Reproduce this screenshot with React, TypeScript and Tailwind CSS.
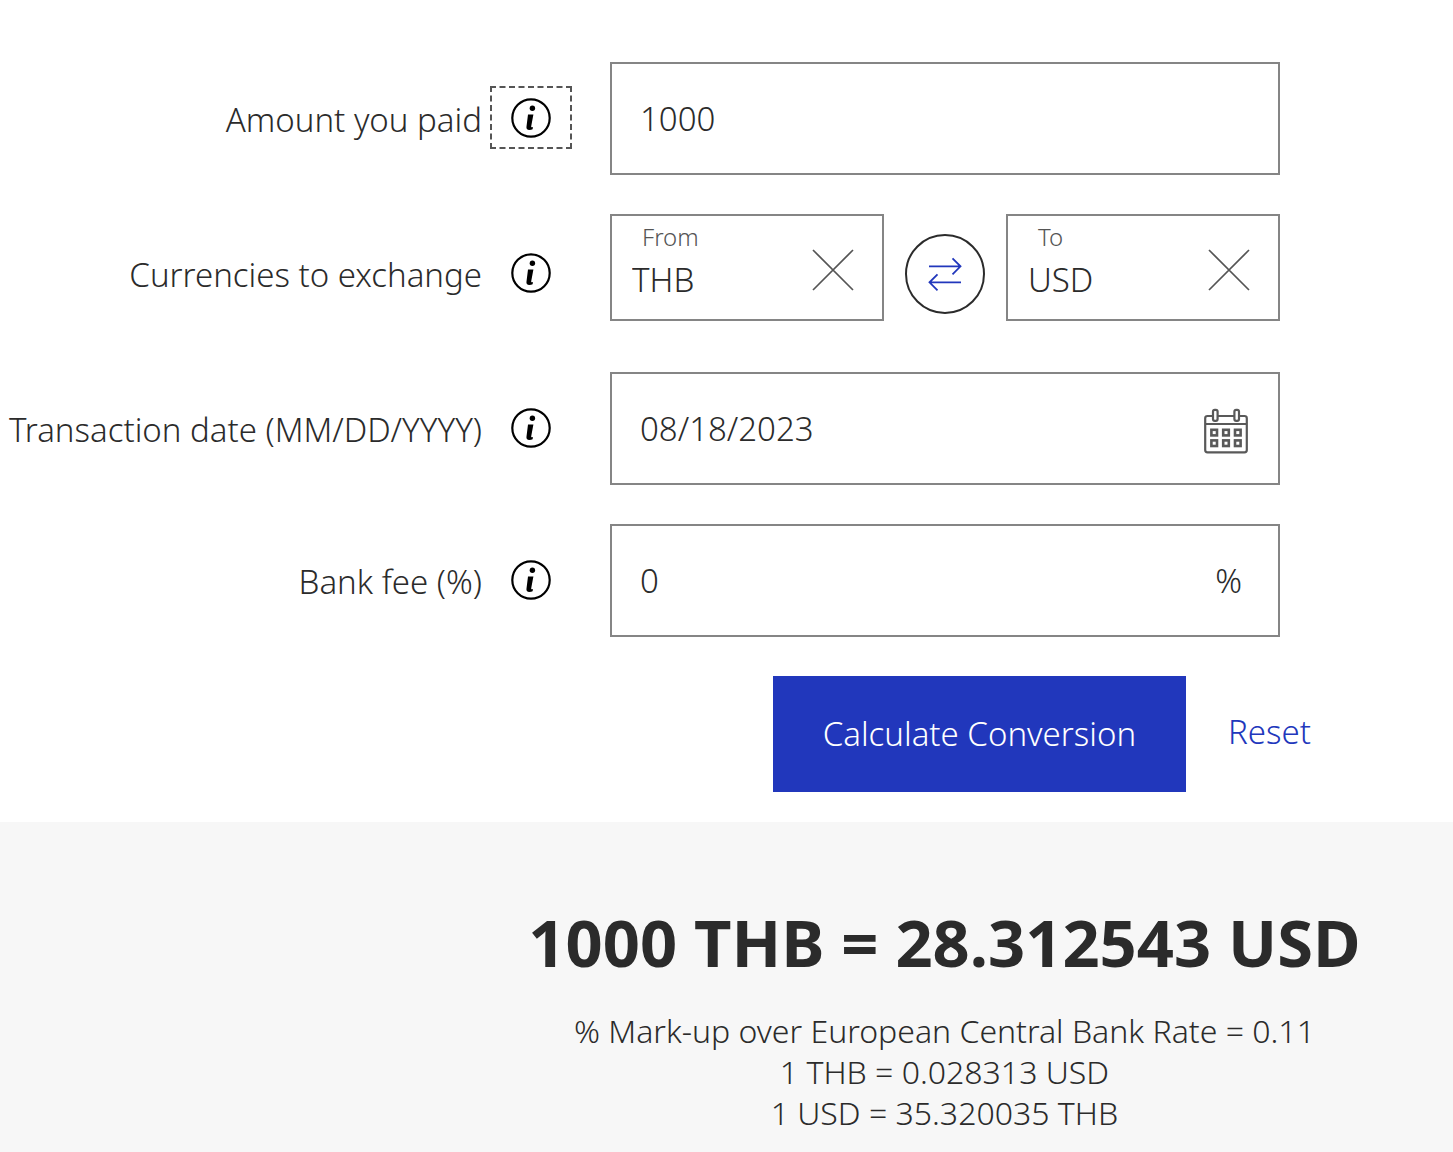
import { useState, type ReactNode } from "react";

function InfoIcon() {
  return (
    <svg width="40" height="40" viewBox="0 0 40 40" fill="none" aria-hidden="true">
      <circle cx="20" cy="20" r="18.7" stroke="#000" strokeWidth="2.2" />
      <circle cx="21.4" cy="10.2" r="2.7" fill="#000" />
      <path
        d="M17 16.400h5.400L20.200 28.200c-.1.900.3 1.100 1 1l.8-.2-.4 2.200c-1 .6-2 .8-3.200.8-2.300 0-3.300-1.300-2.900-3.400z"
        fill="#000"
      />
    </svg>
  );
}

function CloseIcon() {
  return (
    <svg width="42" height="42" viewBox="0 0 42 42" fill="none" aria-hidden="true">
      <path d="M1 1l40 40M41 1L1 41" stroke="#555" strokeWidth="1.7" />
    </svg>
  );
}

function SwapIcon() {
  return (
    <svg width="34" height="34" viewBox="0 0 34 34" fill="none" aria-hidden="true">
      <path
        d="M1 9.300h31.500M24.500 1.300l8 8-8 8M33 25.300H1.500M9.500 17.300l-8 8 8 8"
        stroke="#2137BC"
        strokeWidth="1.8"
      />
    </svg>
  );
}

function CalendarIcon() {
  return (
    <svg width="46" height="46" viewBox="0 0 46 46" fill="none" stroke="#595959" strokeWidth="2.200" aria-hidden="true">
      <path d="M8.800 8H3.500Q1.200 8 1.200 10.300V42Q1.200 44.300 3.500 44.300H40.500Q42.800 44.300 42.800 42V10.300Q42.800 8 40.500 8H35.200M13.800 8H30.200M1.200 16H42.800" />
      <rect x="9" y="1.800" width="4.600" height="11" rx="1.800" />
      <rect x="30.400" y="1.800" width="4.600" height="11" rx="1.800" />
      <g strokeWidth="2.600">
        <rect x="7.400" y="21.800" width="5.600" height="5.600" />
        <rect x="19.200" y="21.800" width="5.600" height="5.600" />
        <rect x="31" y="21.800" width="5.600" height="5.600" />
        <rect x="7.400" y="32.400" width="5.600" height="5.600" />
        <rect x="19.200" y="32.400" width="5.600" height="5.600" />
        <rect x="31" y="32.400" width="5.600" height="5.600" />
      </g>
    </svg>
  );
}

const ROW = "grid grid-cols-[610fr_670fr_173fr] items-center";
const BOX = "flex h-[113px] items-center border-2 border-[#858585] bg-white px-7";
const INPUT = "w-full min-w-0 bg-transparent outline-none";

function Row({ id, label, focused, children }: { id: string; label: string; focused?: boolean; children: ReactNode }) {
  return (
    <div className={ROW}>
      <div className="flex min-w-0 items-center justify-end gap-2 pr-[38px] pb-0.5">
        <label htmlFor={id} className="pt-1 text-right whitespace-nowrap">
          {label}
        </label>
        <button
          type="button"
          aria-label={"About " + label}
          className={
            focused
              ? "flex h-[63px] w-[82px] shrink-0 items-center justify-center border-2 border-dashed border-[#555]"
              : "flex h-[63px] w-[82px] shrink-0 items-center justify-center"
          }
        >
          <InfoIcon />
        </button>
      </div>
      {children}
    </div>
  );
}

function CurrencyBox({ id, label, value, onChange }: { id: string; label: string; value: string; onChange: (v: string) => void }) {
  return (
    <div className="flex h-[107px] min-w-0 flex-1 items-center justify-between border-2 border-[#858585] pl-5 pr-7">
      <div className="min-w-0 pb-2">
        <label htmlFor={id} className="block pl-2.5 text-[24px] leading-8 text-[#555]">
          {label}
        </label>
        <input id={id} value={value} onChange={(e) => onChange(e.target.value)} className="block w-full bg-transparent leading-[54px] outline-none" />
      </div>
      <button type="button" aria-label={"Clear " + label} className="shrink-0 pt-1" onClick={() => onChange("")}>
        <CloseIcon />
      </button>
    </div>
  );
}

export default function App() {
  const [amount, setAmount] = useState("1000");
  const [from, setFrom] = useState("THB");
  const [to, setTo] = useState("USD");
  const [date, setDate] = useState("08/18/2023");
  const [fee, setFee] = useState("0");

  const reset = () => {
    setAmount("");
    setFrom("");
    setTo("");
    setDate("");
    setFee("0");
  };

  return (
    <main className="flex min-h-screen flex-col bg-white font-['Noto_Sans','Open_Sans',sans-serif] text-[33px] leading-10 font-light text-[#2b2b2b]">
      <form className="flex flex-col gap-[39px] pt-[62px] pb-[30px]" onSubmit={(e) => e.preventDefault()}>
        <Row id="amount" label="Amount you paid" focused>
          <div className={BOX}>
            <input id="amount" value={amount} onChange={(e) => setAmount(e.target.value)} className={INPUT} />
          </div>
        </Row>
        <Row id="from" label="Currencies to exchange">
          <div className="flex h-[119px] items-start">
            <CurrencyBox id="from" label="From" value={from} onChange={setFrom} />
            <button
              type="button"
              aria-label="Swap currencies"
              className="mx-[21px] flex size-20 shrink-0 items-center justify-center self-center rounded-full border-2 border-[#2b2b2b]"
              onClick={() => {
                setFrom(to);
                setTo(from);
              }}
            >
              <SwapIcon />
            </button>
            <CurrencyBox id="to" label="To" value={to} onChange={setTo} />
          </div>
        </Row>
        <Row id="date" label="Transaction date (MM/DD/YYYY)">
          <div className={BOX}>
            <input id="date" value={date} onChange={(e) => setDate(e.target.value)} className={INPUT} />
            <button type="button" aria-label="Choose date" className="shrink-0 pt-1">
              <CalendarIcon />
            </button>
          </div>
        </Row>
        <Row id="fee" label="Bank fee (%)">
          <div className={BOX}>
            <input id="fee" value={fee} onChange={(e) => setFee(e.target.value)} className={INPUT} />
            <span className="pr-2">%</span>
          </div>
        </Row>
        <div className="flex items-center justify-end gap-[42px] pr-[142px]">
          <button type="submit" className="h-[116px] bg-[#2137BC] px-[50px] text-white">
            Calculate Conversion
          </button>
          <button type="button" className="pb-1 text-[#2137BC]" onClick={reset}>
            Reset
          </button>
        </div>
      </form>
      <section className="flex-1 bg-[#f7f7f7] pt-20 pb-5 pl-[30%] text-center">
        <h1 className="text-[65px] leading-[80px] font-bold whitespace-nowrap">1000 THB = 28.312543 USD</h1>
        <p className="pt-7 text-[32px] leading-[41px]">
          % Mark-up over European Central Bank Rate = 0.11
          <br />
          1 THB = 0.028313 USD
          <br />
          1 USD = 35.320035 THB
        </p>
      </section>
    </main>
  );
}
